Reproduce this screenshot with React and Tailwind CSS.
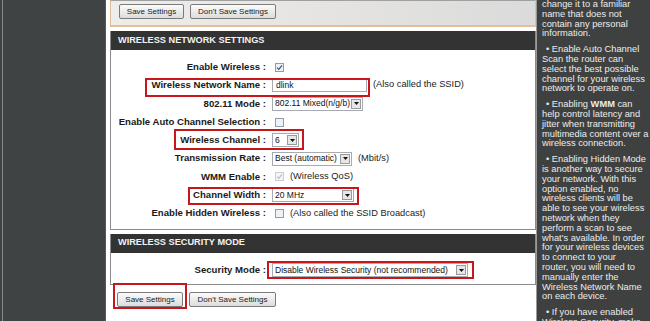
import React from "react";

const tips = [
  ["change it to a familiar", "name that does not", "contain any personal", "information."],
  [
    "• Enable Auto Channel",
    "Scan the router can",
    "select the best possible",
    "channel for your wireless",
    "network to operate on.",
  ],
  [
    "WMM",
    "help control latency and",
    "jitter when transmitting",
    "multimedia content over a",
    "wireless connection.",
  ],
  [
    "• Enabling Hidden Mode",
    "is another way to secure",
    "your network. With this",
    "option enabled, no",
    "wireless clients will be",
    "able to see your wireless",
    "network when they",
    "perform a scan to see",
    "what's available. In order",
    "for your wireless devices",
    "to connect to your",
    "router, you will need to",
    "manually enter the",
    "Wireless Network Name",
    "on each device.",
  ],
  ["• If you have enabled", "Wireless Security, make"],
];

function Button({ children, className }) {
  return (
    <button
      className={`flex h-[15px] items-center justify-center rounded-[2px] border border-[#7b7b7b] bg-gradient-to-b from-[#fbfbfb] to-[#dcdcdc] text-[8px] leading-none text-[#1a1a1a] ${className}`}
    >
      {children}
    </button>
  );
}

function Check({ checked, faded }) {
  return (
    <span
      className={`ml-[3px] flex h-[9px] w-[9px] items-center justify-center border ${
        faded ? "border-[#c9ccd2] bg-[#f6f6f6]" : "border-[#8f9cb1] bg-[#eef1f5]"
      }`}
    >
      {checked && (
        <svg width="7" height="7" viewBox="0 0 7 7">
          <path
            d="M1 3.6 L2.8 5.4 L6 1.4"
            fill="none"
            stroke={faded ? "#b7bfca" : "#3d5a8a"}
            strokeWidth="1.3"
          />
        </svg>
      )}
    </span>
  );
}

function Select({ value, className }) {
  return (
    <div className={`flex h-[14px] items-center border border-[#a6abb3] bg-white ${className}`}>
      <span className="flex-1 truncate pl-[2px] text-[8.5px] leading-none text-[#111]">{value}</span>
      <span className="mr-[1px] flex h-[10px] w-[10px] items-center justify-center border border-[#9a9a9a] bg-[#e6e6e6]">
        <svg width="5" height="3" viewBox="0 0 5 3">
          <path d="M0 0 H5 L2.5 3 Z" fill="#111" />
        </svg>
      </span>
    </div>
  );
}

function Row({ label, children }) {
  return (
    <div className="flex h-[18.3px] items-center">
      <div className="w-[155px] whitespace-nowrap text-right text-[9.6px] font-bold text-[#1a1a1a]">
        {label}&nbsp;:
      </div>
      <div className="ml-[6px] flex items-center gap-[6px]">{children}</div>
    </div>
  );
}

function Note({ children }) {
  return <span className="whitespace-nowrap text-[9.3px] text-[#222]">{children}</span>;
}

function Header({ children }) {
  return (
    <div className="flex h-[19px] items-center bg-[#333333] pl-[7px] text-[9.2px] font-bold text-[#f2f2f2]">
      {children}
    </div>
  );
}

function RedBox({ className }) {
  return <div className={`absolute border-2 border-[#c8161d] ${className}`} />;
}

export default function App() {
  return (
    <div className="relative flex h-[321px] w-[650px] overflow-hidden bg-white font-['Liberation_Sans',Arial,sans-serif]">
      <div className="w-[106px] bg-[#3f4343] pl-[2px]">
        <div className="h-full border-l border-r border-l-[#868a8a] border-r-[#555959]" />
      </div>

      <div className="ml-[4px] w-[426px]">
        <div className="flex h-[27px] gap-[6px] border-x border-t border-b-2 border-x-[#e2bf98] border-t-[#a0a0a0] border-b-[#e2bf98] bg-gradient-to-r from-[#efedea] to-[#dbdbdb] pl-[8px] pt-[3px]">
          <Button className="w-[65px]">Save Settings</Button>
          <Button className="w-[86px]">Don't Save Settings</Button>
        </div>

        <div className="mt-[4px] border-x border-b border-[#8a8a8a]">
          <Header>WIRELESS NETWORK SETTINGS</Header>
          <div className="pb-[6px] pt-[8px]">
            <Row label="Enable Wireless">
              <Check checked />
            </Row>
            <Row label="Wireless Network Name">
              <div className="flex h-[14px] w-[95px] items-center border border-[#a6abb3] bg-white pl-[3px] text-[8.5px] text-[#111]">
                dlink
              </div>
              <Note>(Also called the SSID)</Note>
            </Row>
            <Row label="802.11 Mode">
              <Select value="802.11 Mixed(n/g/b)" className="w-[91px]" />
            </Row>
            <Row label="Enable Auto Channel Selection">
              <Check />
            </Row>
            <Row label="Wireless Channel">
              <Select value="6" className="w-[27px]" />
            </Row>
            <Row label="Transmission Rate">
              <Select value="Best (automatic)" className="w-[80px]" />
              <Note>(Mbit/s)</Note>
            </Row>
            <Row label="WMM Enable">
              <Check checked faded />
              <Note>(Wireless QoS)</Note>
            </Row>
            <Row label="Channel Width">
              <Select value="20 MHz" className="w-[82px]" />
            </Row>
            <Row label="Enable Hidden Wireless">
              <Check />
              <Note>(Also called the SSID Broadcast)</Note>
            </Row>
          </div>
        </div>

        <div className="mt-[4px] border-x border-b border-[#8a8a8a]">
          <Header>WIRELESS SECURITY MODE</Header>
          <div className="pb-[5px] pt-[8.5px]">
            <Row label="Security Mode">
              <Select value="Disable Wireless Security (not recommended)" className="w-[196px]" />
            </Row>
          </div>
        </div>

        <div className="mt-[7px] flex gap-[6px] pl-[7px]">
          <Button className="w-[66px]">Save Settings</Button>
          <Button className="w-[87px]">Don't Save Settings</Button>
        </div>
      </div>

      <div className="flex-1 border-l border-[#9a9a9a] bg-[#3f4141] pl-[5px] text-[9.3px] leading-[9.8px] text-[#ececec]">
        {tips.map((lines, i) => (
          <div key={i} className="mb-[6px]">
            {lines.map((line, j) =>
              i === 2 && j === 0 ? (
                <div key={j} className="whitespace-nowrap pl-[4px]">
                  • Enabling <b>WMM</b> can
                </div>
              ) : (
                <div key={j} className={`whitespace-nowrap ${j === 0 && i > 0 ? "pl-[4px]" : ""}`}>
                  {line}
                </div>
              )
            )}
          </div>
        ))}
      </div>

      <RedBox className="left-[145px] top-[78px] h-[19px] w-[225px]" />
      <RedBox className="left-[174px] top-[129px] h-[21px] w-[130px]" />
      <RedBox className="left-[188px] top-[187px] h-[18px] w-[171px]" />
      <RedBox className="left-[267px] top-[261px] h-[18px] w-[207px]" />
      <RedBox className="left-[113px] top-[283px] h-[26px] w-[74px]" />
    </div>
  );
}
